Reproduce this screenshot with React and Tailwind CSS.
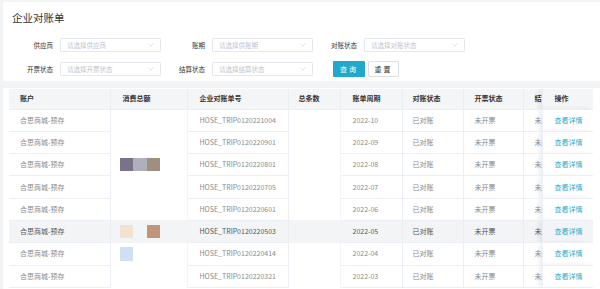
import { ChevronDown } from "lucide-react";

const FONT = { fontFamily: '"Noto Sans CJK SC", "Noto Sans", sans-serif' };

const rows = [
  { no: "HOSE_TRIP0120221004", period: "2022-10" },
  { no: "HOSE_TRIP0120220901", period: "2022-09" },
  { no: "HOSE_TRIP0120220801", period: "2022-08", blur: ["#7a728a", "#aeb0bb", "#a08f80"] },
  { no: "HOSE_TRIP0120220705", period: "2022-07" },
  { no: "HOSE_TRIP0120220601", period: "2022-06" },
  { no: "HOSE_TRIP0120220503", period: "2022-05", active: true, blur: ["#f0e3cf", null, "#c0967a"] },
  { no: "HOSE_TRIP0120220414", period: "2022-04", blur: ["#cfe0f0"] },
  { no: "HOSE_TRIP0120220321", period: "2022-03" },
];

const Select = ({ placeholder }) => (
  <div className="flex items-center justify-between w-[101px] h-[14px] border border-[#e4e7ed] bg-white rounded-[1px] pl-[6px] pr-[5px]">
    <span className="text-[6.5px] text-[#c0c4cc] leading-none">{placeholder}</span>
    <ChevronDown size={8} strokeWidth={1.5} color="#c0c4cc" />
  </div>
);

const Field = ({ label, placeholder }) => (
  <div className="flex items-center w-[152px]">
    <span className="w-[44px] text-right text-[6.5px] text-[#333] leading-none">{label}</span>
    <div className="ml-[7px]">
      <Select placeholder={placeholder} />
    </div>
  </div>
);

const App = () => {
  return (
    <div className="w-[600px] h-[289px] overflow-hidden bg-[#f2f3f5] pt-[2px] pl-[3px]" style={FONT}>
      {/* filters */}
      <div className="bg-white h-[79px] pl-[6px]">
        <h2 className="pt-[9px] pl-[3px] text-[10.5px] leading-[14px] text-[#333]">企业对账单</h2>
        <div className="mt-[13px] flex">
          <Field label="供应商" placeholder="请选择供应商" />
          <Field label="账期" placeholder="请选择供账期" />
          <Field label="对账状态" placeholder="请选择对账状态" />
        </div>
        <div className="mt-[9px] flex items-center">
          <Field label="开票状态" placeholder="请选择开票状态" />
          <Field label="结算状态" placeholder="请选择结算状态" />
          <div className="flex items-center gap-[3px] ml-[20px]">
            <button className="w-[32px] h-[16px] bg-[#22a9c9] text-white text-[7px] leading-none rounded-[1px] tracking-[2px]">查询</button>
            <button className="w-[31px] h-[16px] bg-white border border-[#dcdfe6] text-[#333] text-[7px] leading-none rounded-[1px] tracking-[2px]">重置</button>
          </div>
        </div>
      </div>

      {/* table */}
      <div className="mt-[7px] bg-white h-[300px] pl-[6px] pr-[4px] pt-[1px]">
        <div className="relative w-[584px] overflow-hidden">
          <table className="w-[584px] table-fixed border-collapse text-[7px] leading-none">
            <colgroup>
              <col className="w-[101px]" />
              <col className="w-[77px]" />
              <col className="w-[101px]" />
              <col className="w-[52px]" />
              <col className="w-[62px]" />
              <col className="w-[61px]" />
              <col className="w-[60px]" />
              <col className="w-[19px]" />
              <col className="w-[51px]" />
            </colgroup>
            <thead>
              <tr className="h-[20px] bg-[#f4f5f7] text-[#333] text-left">
                <th className="pl-[11px] border-r border-b border-[#ebeef5] font-semibold">账户</th>
                <th className="pl-[12px] border-r border-b border-[#ebeef5] font-semibold">消费总额</th>
                <th className="pl-[12px] border-r border-b border-[#ebeef5] font-semibold">企业对账单号</th>
                <th className="pl-[10px] border-r border-b border-[#ebeef5] font-semibold">总条数</th>
                <th className="pl-[12px] border-r border-b border-[#ebeef5] font-semibold">账单周期</th>
                <th className="pl-[10px] border-r border-b border-[#ebeef5] font-semibold">对账状态</th>
                <th className="pl-[11px] border-r border-b border-[#ebeef5] font-semibold">开票状态</th>
                <th className="pl-[11px] border-b border-[#ebeef5] font-semibold whitespace-nowrap overflow-hidden">结算状态</th>
                <th className="pl-[12px] border-b border-l border-[#ebeef5] font-semibold shadow-[-3px_0_5px_rgba(0,0,0,0.07)] bg-[#f4f5f7]">操作</th>
              </tr>
            </thead>
            <tbody>
              {rows.map((r) => {
                const bg = r.active ? "bg-[#f3f4f6]" : "bg-white";
                const txt = r.active ? "text-[#555]" : "text-[#8a8a8a]";
                return (
                  <tr key={r.no} className={`h-[22.3px] ${bg} ${txt}`}>
                    <td className="pl-[11px] border-r border-b border-[#ebeef5] whitespace-nowrap">合思商城-预存</td>
                    <td className="pl-[9px] border-r border-[#f3f4f6]">
                      {r.blur && (
                        <div className="flex">
                          {r.blur.map((c, i) => (
                            <span
                              key={i}
                              className="block w-[13.5px] h-[13.5px]"
                              style={{ background: c || "transparent" }}
                            />
                          ))}
                        </div>
                      )}
                    </td>
                    <td className="pl-[12px] border-r border-b border-[#ebeef5] whitespace-nowrap">{r.no}</td>
                    <td className="border-r border-[#f3f4f6]"></td>
                    <td className="pl-[12px] border-r border-b border-[#ebeef5]">{r.period}</td>
                    <td className="pl-[10px] border-r border-b border-[#ebeef5]">已对账</td>
                    <td className="pl-[11px] border-r border-b border-[#ebeef5]">未开票</td>
                    <td className="pl-[11px] border-b border-[#ebeef5] whitespace-nowrap overflow-hidden">未结算</td>
                    <td className={`pl-[12px] border-b border-l border-[#ebeef5] shadow-[-3px_0_5px_rgba(0,0,0,0.07)] ${bg}`}>
                      <a className="text-[#2fa9cc] cursor-pointer">查看详情</a>
                    </td>
                  </tr>
                );
              })}
            </tbody>
          </table>
        </div>
      </div>
    </div>
  );
};

export default App;
